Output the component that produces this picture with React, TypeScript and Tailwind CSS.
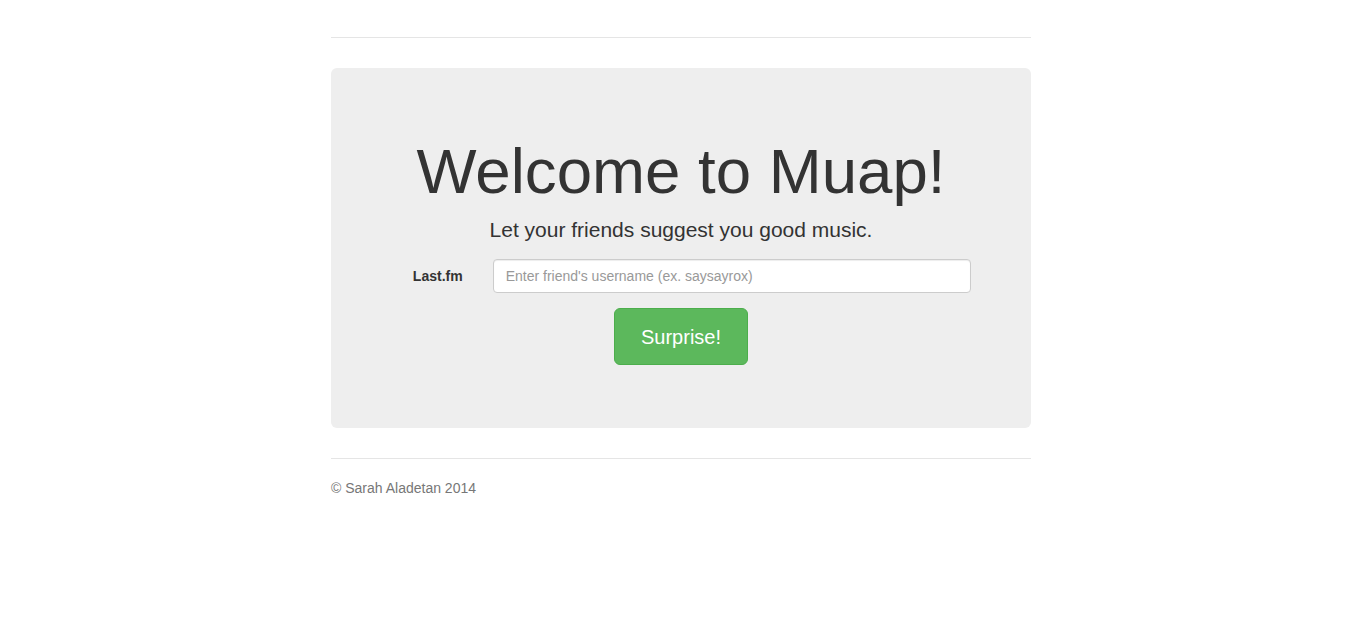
import React from 'react';

export default function App() {
  return (
    <div className="min-h-screen bg-white pr-[1px] font-['Liberation_Sans',Arial,sans-serif] text-[14px] leading-[20px] text-[#333]">
      <div className="mx-auto w-[700px]">
        {/* Header */}
        <div className="h-[38px] border-b border-[#e5e5e5]" />

        {/* Jumbotron */}
        <div className="mt-[30px] rounded-[6px] bg-[#eee] px-[60px] py-[48px] text-center">
          <h1 className="mt-[20px] mb-[10px] text-[63.6px] leading-[69px] font-normal text-[#333]">
            Welcome to Muap!
          </h1>
          <p className="mb-[15px] text-[21px] leading-[29px] font-light">
            Let your friends suggest you good music.
          </p>

          <form className="text-left" onSubmit={(e) => e.preventDefault()}>
            <div className="mx-[-15px] mb-[15px] flex">
              <label
                htmlFor="friend"
                className="w-1/6 px-[15px] pt-[7px] text-right font-bold"
              >
                Last.fm
              </label>
              <div className="w-5/6 px-[15px]">
                <input
                  id="friend"
                  type="text"
                  placeholder="Enter friend's username (ex. saysayrox)"
                  className="block h-[34px] w-full rounded-[4px] border border-[#ccc] bg-white px-[12px] py-[6px] text-[14px] text-[#555] shadow-[inset_0_1px_1px_rgba(0,0,0,0.075)] outline-none placeholder:text-[#999]"
                />
              </div>
            </div>
            <div className="mb-[15px] flex justify-center">
              <button
                type="submit"
                className="h-[57px] w-[134px] rounded-[6px] border border-[#4cae4c] bg-[#5cb85c] text-[20px] text-white"
              >
                Surprise!
              </button>
            </div>
          </form>
        </div>

        {/* Footer */}
        <div className="mt-[30px] border-t border-[#e5e5e5] pt-[19px] text-[#777]">
          <p>© Sarah Aladetan 2014</p>
        </div>
      </div>
    </div>
  );
}
